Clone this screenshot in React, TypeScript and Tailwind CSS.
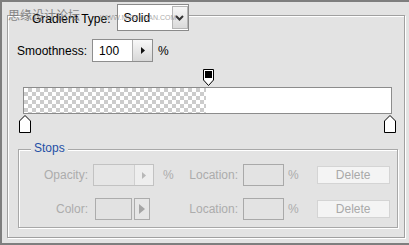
import React from "react";

const font = { fontFamily: '"Liberation Sans", Arial, sans-serif' };

function TopStop() {
  return (
    <svg width="11" height="17" viewBox="0 0 11 17" className="absolute left-[180px] top-0">
      <path d="M0.5 0.5 H10.5 V11 L5.5 16.5 L0.5 11 Z" fill="#fff" stroke="#000" />
      <rect x="2" y="2" width="7" height="7" fill="#000" />
    </svg>
  );
}

function BottomStop({ className }: { className: string }) {
  return (
    <svg width="12" height="18" viewBox="0 0 12 18" className={className}>
      <path d="M6 0.5 L11.5 6 V17.5 H0.5 V6 Z" fill="#fff" stroke="#000" />
    </svg>
  );
}

export default function App() {
  return (
    <div
      style={font}
      className="relative w-[409px] h-[245px] bg-[#e3e3e3] border-l-2 border-t-2 border-b-2 border-[#7e7e7e] pl-[5px] pt-[13px] text-[12px] leading-[14px] text-black"
    >
      <div className="w-[398px] h-[223px] border border-[#a0a0a0] shadow-[1px_1px_0_#fff,inset_1px_1px_0_#fff] flex flex-col">
        {/* gradient type */}
        <div className="flex items-center -mt-[12px] ml-[20px] h-[27px]">
          <span className="bg-[#e3e3e3] px-[4px] pt-[2px]">Gradient Type:</span>
          <div className="ml-[2px] w-[72px] h-[27px] border border-[#8a8a8a] bg-white flex items-center">
            <span className="pl-[6px]">Solid</span>
            <div className="ml-auto w-[16px] h-[23px] border border-[#b5b5b5] bg-gradient-to-b from-[#f6f6f6] to-[#dadada] flex items-center justify-center">
              <svg width="9" height="6" viewBox="0 0 9 6">
                <path d="M1 1 L4.5 4.5 L8 1" fill="none" stroke="#333" strokeWidth="2" />
              </svg>
            </div>
          </div>
        </div>

        {/* smoothness */}
        <div className="flex items-center mt-[8px] pl-[9px] h-[23px]">
          <span>Smoothness:</span>
          <div className="ml-[5px] w-[61px] h-[23px] border border-[#8e8e8e] bg-white flex items-center">
            <span className="pl-[6px]">100</span>
            <div className="ml-auto w-[20px] h-[21px] border-l border-[#b0b0b0] bg-gradient-to-b from-[#f8f8f8] to-[#d8d8d8] flex items-center justify-center">
              <svg width="4" height="7" viewBox="0 0 4 7">
                <path d="M0 0 L4 3.5 L0 7 Z" fill="#111" />
              </svg>
            </div>
          </div>
          <span className="ml-[5px]">%</span>
        </div>

        {/* gradient bar */}
        <div className="relative mt-[7px] ml-[15px] w-[369px] h-[64px]">
          <TopStop />
          <div className="absolute left-0 top-[18px] w-[369px] h-[27px] border border-[#8c8c8c] bg-white flex">
            <div className="w-[182px] h-full bg-[repeating-conic-gradient(#cccccc_0_25%,#ffffff_0_50%)] bg-[length:8px_8px]" />
          </div>
          <BottomStop className="absolute left-[-4px] top-[46px]" />
          <BottomStop className="absolute left-[361px] top-[46px]" />
        </div>

        {/* stops group */}
        <div className="mt-[16px] ml-[10px] w-[380px] h-[79px] border border-[#a8a8a8] shadow-[1px_1px_0_#fff,inset_1px_1px_0_#fff] flex flex-col text-[#acacac]">
          <span className="-mt-[9px] ml-[12px] px-[3px] self-start bg-[#e3e3e3] text-[#1f4fa6] leading-[14px]">
            Stops
          </span>

          <div className="flex items-center mt-[9px] h-[22px]">
            <div className="w-[155px] flex items-center">
              <span className="w-[69px] text-right">Opacity:</span>
              <div className="ml-[5px] w-[61px] h-[22px] border border-[#c2c2c2] bg-[#e6e6e6] flex">
                <div className="ml-auto w-[19px] h-full border-l border-[#d0d0d0] bg-[#eeeeee] flex items-center justify-center">
                  <svg width="4" height="7" viewBox="0 0 4 7">
                    <path d="M0 0 L4 3.5 L0 7 Z" fill="#b8b8b8" />
                  </svg>
                </div>
              </div>
              <span className="ml-[9px]">%</span>
            </div>
            <span className="w-[64px] text-right">Location:</span>
            <div className="ml-[5px] w-[41px] h-[22px] border border-[#a9a9a9]" />
            <span className="ml-[4px]">%</span>
            <div className="ml-[18px] w-[73px] h-[18px] border border-[#d4d4d4] bg-[#f4f4f4] flex items-center justify-center text-[#a9a9a9]">
              Delete
            </div>
          </div>

          <div className="flex items-center mt-[12px] h-[22px]">
            <div className="w-[155px] flex items-center">
              <span className="w-[69px] text-right">Color:</span>
              <div className="ml-[7px] w-[37px] h-[22px] border border-[#acacac] bg-[#e2e2e2]" />
              <div className="ml-[2px] w-[16px] h-[22px] border border-[#acacac] bg-[#e6e6e6] flex items-center justify-center">
                <svg width="6" height="10" viewBox="0 0 6 10">
                  <path d="M0 0 L6 5 L0 10 Z" fill="#a5a5a5" />
                </svg>
              </div>
            </div>
            <span className="w-[64px] text-right">Location:</span>
            <div className="ml-[5px] w-[41px] h-[22px] border border-[#a9a9a9]" />
            <span className="ml-[4px]">%</span>
            <div className="ml-[18px] w-[73px] h-[18px] border border-[#d4d4d4] bg-[#f4f4f4] flex items-center justify-center text-[#a9a9a9]">
              Delete
            </div>
          </div>
        </div>
      </div>

      {/* watermark */}
      <span
        className="absolute left-[6px] top-[6px] text-[12px] leading-[14px] text-[#6e6e6e] opacity-80"
        style={{ fontFamily: '"Noto Sans CJK SC", sans-serif' }}
      >
        思缘设计论坛
      </span>
      <span className="absolute left-[98px] top-[12px] text-[7px] leading-[8px] text-[#8a8a8a] opacity-70">
        WWW.MISSYUAN.COM
      </span>
    </div>
  );
}
